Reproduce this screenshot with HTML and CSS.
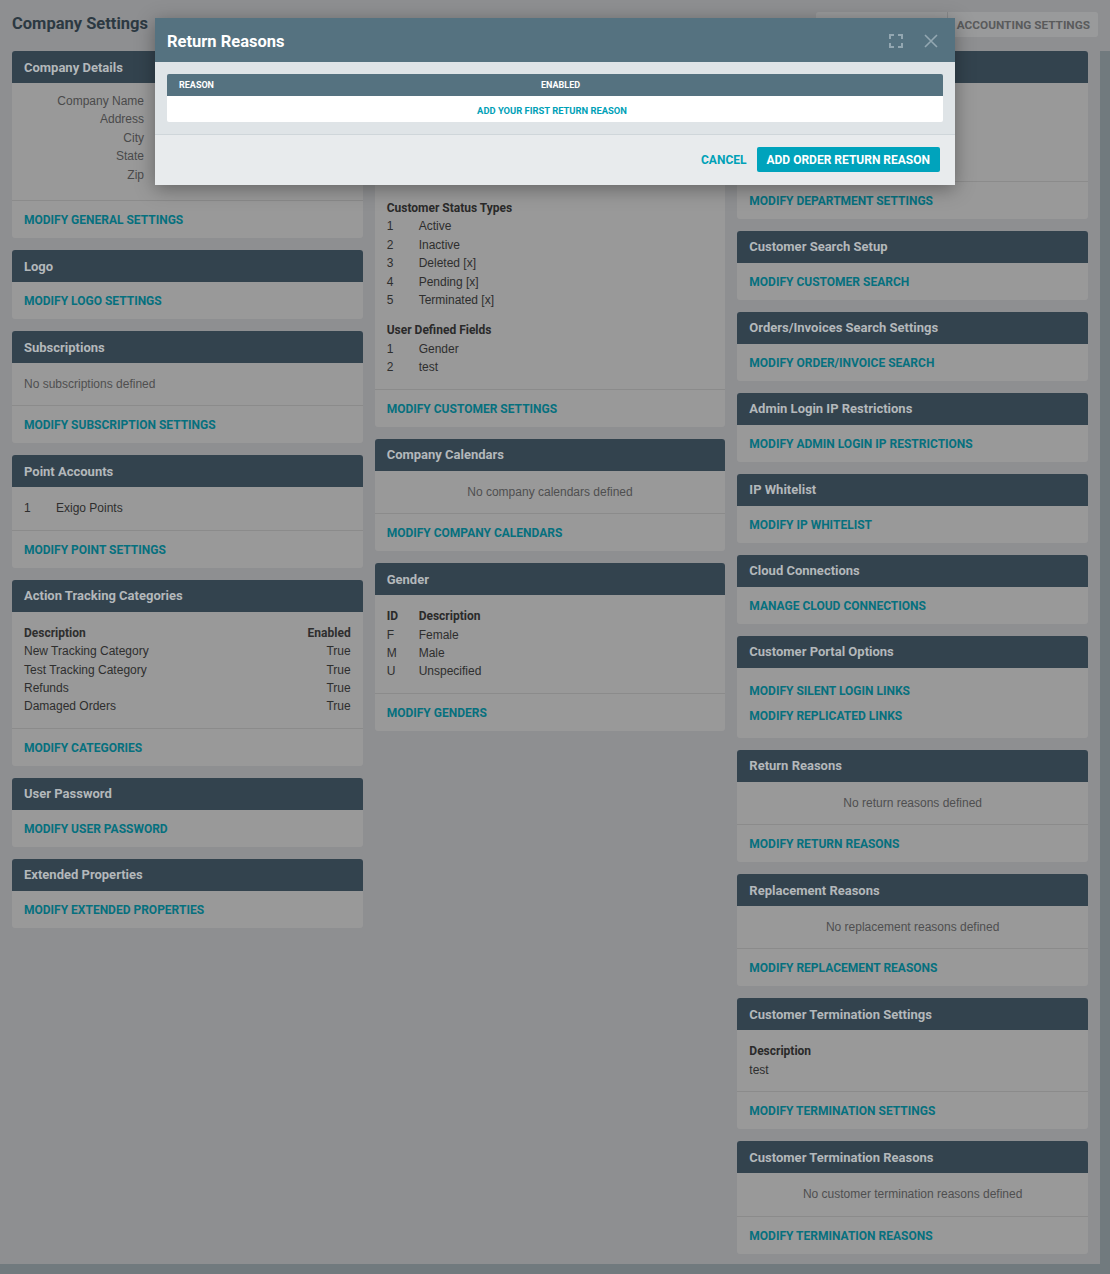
FILE: index.html
```html
<!DOCTYPE html>
<html lang="en">
<head>
<meta charset="utf-8">
<title>Company Settings</title>
<link rel="stylesheet" href="styles.css">
</head>
<body>
<div class="topbar">
  <h1 class="page-title">Company Settings</h1>
  <nav class="tabs">
    <span class="tab tab-general">GENERAL</span>
    <span class="tab">ACCOUNTING SETTINGS</span>
  </nav>
</div>
<main class="page">
  <div class="col">
    <section class="card">
      <header class="card-h">Company Details</header>
      <div class="card-b details">
        <div class="kv"><span class="k">Company Name</span><span class="v"></span></div>
        <div class="kv"><span class="k">Address</span><span class="v"></span></div>
        <div class="kv"><span class="k">City</span><span class="v"></span></div>
        <div class="kv"><span class="k">State</span><span class="v"></span></div>
        <div class="kv"><span class="k">Zip</span><span class="v"></span></div>
      </div>
      <div class="card-f"><a class="lnk">MODIFY GENERAL SETTINGS</a></div>
    </section>
    <section class="card">
      <header class="card-h">Logo</header>
      <div class="card-f"><a class="lnk">MODIFY LOGO SETTINGS</a></div>
    </section>
    <section class="card">
      <header class="card-h">Subscriptions</header>
      <div class="card-b"><p class="empty left">No subscriptions defined</p></div>
      <div class="card-f"><a class="lnk">MODIFY SUBSCRIPTION SETTINGS</a></div>
    </section>
    <section class="card">
      <header class="card-h">Point Accounts</header>
      <div class="card-b">
        <div class="lrow"><span>1</span><span>Exigo Points</span></div>
      </div>
      <div class="card-f"><a class="lnk">MODIFY POINT SETTINGS</a></div>
    </section>
    <section class="card">
      <header class="card-h">Action Tracking Categories</header>
      <div class="card-b">
        <div class="trow th"><span>Description</span><span>Enabled</span></div>
        <div class="trow"><span>New Tracking Category</span><span>True</span></div>
        <div class="trow"><span>Test Tracking Category</span><span>True</span></div>
        <div class="trow"><span>Refunds</span><span>True</span></div>
        <div class="trow"><span>Damaged Orders</span><span>True</span></div>
      </div>
      <div class="card-f"><a class="lnk">MODIFY CATEGORIES</a></div>
    </section>
    <section class="card">
      <header class="card-h">User Password</header>
      <div class="card-f"><a class="lnk">MODIFY USER PASSWORD</a></div>
    </section>
    <section class="card">
      <header class="card-h">Extended Properties</header>
      <div class="card-f"><a class="lnk">MODIFY EXTENDED PROPERTIES</a></div>
    </section>
  </div>

  <div class="col">
    <section class="card">
      <header class="card-h">Customer Settings</header>
      <div class="card-b groups">
        <div class="group">
          <div class="gtitle">Customer Types</div>
          <div class="lrow"><span>1</span><span>Retail</span></div>
          <div class="lrow"><span>2</span><span>Preferred</span></div>
          <div class="lrow"><span>3</span><span>Wholesale</span></div>
          <div class="lrow"><span>4</span><span>Distributor</span></div>
        </div>
        <div class="group">
          <div class="gtitle">Customer Status Types</div>
          <div class="lrow"><span>1</span><span>Active</span></div>
          <div class="lrow"><span>2</span><span>Inactive</span></div>
          <div class="lrow"><span>3</span><span>Deleted [x]</span></div>
          <div class="lrow"><span>4</span><span>Pending [x]</span></div>
          <div class="lrow"><span>5</span><span>Terminated [x]</span></div>
        </div>
        <div class="group">
          <div class="gtitle">User Defined Fields</div>
          <div class="lrow"><span>1</span><span>Gender</span></div>
          <div class="lrow"><span>2</span><span>test</span></div>
        </div>
      </div>
      <div class="card-f"><a class="lnk">MODIFY CUSTOMER SETTINGS</a></div>
    </section>
    <section class="card">
      <header class="card-h">Company Calendars</header>
      <div class="card-b"><p class="empty">No company calendars defined</p></div>
      <div class="card-f"><a class="lnk">MODIFY COMPANY CALENDARS</a></div>
    </section>
    <section class="card">
      <header class="card-h">Gender</header>
      <div class="card-b">
        <div class="lrow th"><span>ID</span><span>Description</span></div>
        <div class="lrow"><span>F</span><span>Female</span></div>
        <div class="lrow"><span>M</span><span>Male</span></div>
        <div class="lrow"><span>U</span><span>Unspecified</span></div>
      </div>
      <div class="card-f"><a class="lnk">MODIFY GENDERS</a></div>
    </section>
  </div>

  <div class="col">
    <section class="card">
      <header class="card-h">Departments</header>
      <div class="card-b depts">
        <div class="lrow"><span>1</span><span>Sales</span></div>
        <div class="lrow"><span>2</span><span>Support</span></div>
        <div class="lrow"><span>3</span><span>Billing</span></div>
      </div>
      <div class="card-f"><a class="lnk">MODIFY DEPARTMENT SETTINGS</a></div>
    </section>
    <section class="card">
      <header class="card-h">Customer Search Setup</header>
      <div class="card-f"><a class="lnk">MODIFY CUSTOMER SEARCH</a></div>
    </section>
    <section class="card">
      <header class="card-h">Orders/Invoices Search Settings</header>
      <div class="card-f"><a class="lnk">MODIFY ORDER/INVOICE SEARCH</a></div>
    </section>
    <section class="card">
      <header class="card-h">Admin Login IP Restrictions</header>
      <div class="card-f"><a class="lnk">MODIFY ADMIN LOGIN IP RESTRICTIONS</a></div>
    </section>
    <section class="card">
      <header class="card-h">IP Whitelist</header>
      <div class="card-f"><a class="lnk">MODIFY IP WHITELIST</a></div>
    </section>
    <section class="card">
      <header class="card-h">Cloud Connections</header>
      <div class="card-f"><a class="lnk">MANAGE CLOUD CONNECTIONS</a></div>
    </section>
    <section class="card">
      <header class="card-h">Customer Portal Options</header>
      <div class="card-f multi">
        <a class="lnk">MODIFY SILENT LOGIN LINKS</a>
        <a class="lnk">MODIFY REPLICATED LINKS</a>
      </div>
    </section>
    <section class="card">
      <header class="card-h">Return Reasons</header>
      <div class="card-b"><p class="empty">No return reasons defined</p></div>
      <div class="card-f"><a class="lnk">MODIFY RETURN REASONS</a></div>
    </section>
    <section class="card">
      <header class="card-h">Replacement Reasons</header>
      <div class="card-b"><p class="empty">No replacement reasons defined</p></div>
      <div class="card-f"><a class="lnk">MODIFY REPLACEMENT REASONS</a></div>
    </section>
    <section class="card">
      <header class="card-h">Customer Termination Settings</header>
      <div class="card-b">
        <div class="gtitle">Description</div>
        <div class="plain">test</div>
      </div>
      <div class="card-f"><a class="lnk">MODIFY TERMINATION SETTINGS</a></div>
    </section>
    <section class="card">
      <header class="card-h">Customer Termination Reasons</header>
      <div class="card-b"><p class="empty">No customer termination reasons defined</p></div>
      <div class="card-f"><a class="lnk">MODIFY TERMINATION REASONS</a></div>
    </section>
  </div>
</main>

<div class="modal" role="dialog" aria-label="Return Reasons">
  <div class="modal-h">
    <h2 class="modal-title">Return Reasons</h2>
    <div class="modal-icons">
      <svg class="ico" width="14" height="14" viewBox="0 0 14 14" fill="none" stroke="currentColor" stroke-width="2">
        <path d="M1 5V1h4M9 1h4v4M13 9v4H9M5 13H1V9"/>
      </svg>
      <svg class="ico" width="14" height="14" viewBox="0 0 14 14" fill="none" stroke="currentColor" stroke-width="1.6">
        <path d="M1 1l12 12M13 1L1 13"/>
      </svg>
    </div>
  </div>
  <div class="modal-b">
    <div class="mtable">
      <div class="mth"><span>REASON</span><span>ENABLED</span></div>
      <div class="mtr"><a class="mlink">ADD YOUR FIRST RETURN REASON</a></div>
    </div>
  </div>
  <div class="modal-f">
    <a class="btn-text">CANCEL</a>
    <a class="btn">ADD ORDER RETURN REASON</a>
  </div>
</div>
</body>
</html>
```
FILE: styles.css
```css
* { box-sizing: border-box; }
html, body { margin: 0; padding: 0; }
body {
  background: #717a7e;
  font-family: "Liberation Sans", Arial, sans-serif;
  font-size: 12px;
  color: #2a2a2a;
  width: 1110px;
  min-height: 1274px;
  position: relative;
}
.topbar {
  background: #8e8f91;
  height: 51px;
  padding: 12px 12px 0 12px;
  display: flex;
  justify-content: space-between;
  align-items: flex-start;
}
.page-title {
  margin: 1px 0 0;
  font-family: Roboto, sans-serif;
  font-weight: 700;
  font-size: 16.5px;
  line-height: 22px;
  color: #2c3942;
  white-space: nowrap;
}
.tabs {
  display: flex;
  flex-shrink: 0;
  gap: 1px;
  background: #86888a;
  border-radius: 2px;
  overflow: hidden;
}
.tab {
  background: #999a9b;
  height: 25px;
  padding: 0 8px 0 9px;
  display: flex;
  align-items: center;
  white-space: nowrap;
  font-family: Roboto, sans-serif;
  font-weight: 700;
  font-size: 11.8px;
  color: #5a5b5c;
}
.tab-general { width: 131px; overflow: hidden; }
.page {
  width: 1100px;
  background: #8e8f91;
  padding: 0 12px 10px 12px;
  display: grid;
  grid-template-columns: repeat(3, 1fr);
  column-gap: 12px;
  align-items: start;
}
.col { display: flex; flex-direction: column; gap: 12px; }
.card { background: #999999; border-radius: 3px; overflow: hidden; }
.card-h {
  background: #33434e;
  color: #b3b8bb;
  height: 32px;
  padding: 0 12px;
  display: flex;
  align-items: center;
  font-family: Roboto, sans-serif;
  font-weight: 700;
  font-size: 13px;
}
.card-b {
  padding: 12px;
  border-bottom: 1px solid #8b8b8b;
  line-height: 18.4px;
}
.card-b.details { padding: 9px 12px 16px; }
.card-b.depts { padding-bottom: 30.4px; }
.card-f {
  padding: 12px 12px 11px;
  line-height: 14px;
}
.card-f.multi { display: flex; flex-direction: column; gap: 11px; padding: 16px 12px 15px; }
.lnk {
  font-family: Roboto, sans-serif;
  font-weight: 700;
  font-size: 12px;
  color: #06707e;
  text-decoration: none;
  display: block;
}
.kv { display: grid; grid-template-columns: 120px 1fr; column-gap: 12px; }
.kv .k { text-align: right; color: #4a4a4b; }
.empty { margin: 0; text-align: center; color: #4f4f50; }
.empty.left { text-align: left; }
.lrow { display: grid; grid-template-columns: 32px 1fr; color: #2e2e2e; }
.th { font-family: Roboto, sans-serif; font-weight: 700; color: #2a2a2a; }
.trow { display: flex; justify-content: space-between; color: #2e2e2e; }
.groups { display: flex; flex-direction: column; gap: 12px; }
.gtitle { font-family: Roboto, sans-serif; font-weight: 700; color: #2a2a2a; }
.plain { color: #2e2e2e; }

.modal {
  position: absolute;
  left: 155px;
  top: 18px;
  width: 800px;
  background: #e8ebed;
  box-shadow: 0 4px 18px rgba(0, 0, 0, 0.35);
}
.modal-h {
  background: #557280;
  height: 44px;
  padding: 2px 12px 0;
  display: flex;
  align-items: center;
  justify-content: space-between;
}
.modal-title {
  margin: 0;
  font-family: Roboto, sans-serif;
  font-weight: 700;
  font-size: 16.5px;
  color: #ffffff;
}
.modal-icons { display: flex; gap: 21px; align-items: center; padding-right: 5px; color: #93a7b1; }
.ico { display: block; }
.modal-b { background: #dfe4e7; padding: 12px; border-bottom: 1px solid #cfd6da; }
.mtable { border-radius: 2px; overflow: hidden; }
.mth {
  background: #557280;
  height: 22px;
  display: grid;
  grid-template-columns: 362px 1fr;
  align-items: center;
  font-family: Roboto, sans-serif;
  font-weight: 700;
  font-size: 9px;
  color: #ffffff;
}
.mth span { padding-left: 12px; }
.mtr {
  background: #ffffff;
  height: 26px;
  display: flex;
  align-items: center;
  justify-content: center;
  padding: 2px 6px 0 0;
}
.mlink {
  font-family: Roboto, sans-serif;
  font-weight: 700;
  font-size: 9.4px;
  color: #00a1b7;
}
.modal-f {
  height: 50px;
  padding: 0 15px 1px;
  display: flex;
  align-items: center;
  justify-content: flex-end;
  gap: 10px;
}
.btn-text {
  font-family: Roboto, sans-serif;
  font-weight: 700;
  font-size: 12px;
  color: #00a1b7;
}
.btn {
  background: #00a3bc;
  color: #ffffff;
  height: 25px;
  padding: 0 10px;
  border-radius: 2px;
  display: flex;
  align-items: center;
  font-family: Roboto, sans-serif;
  font-weight: 700;
  font-size: 12px;
}
```
